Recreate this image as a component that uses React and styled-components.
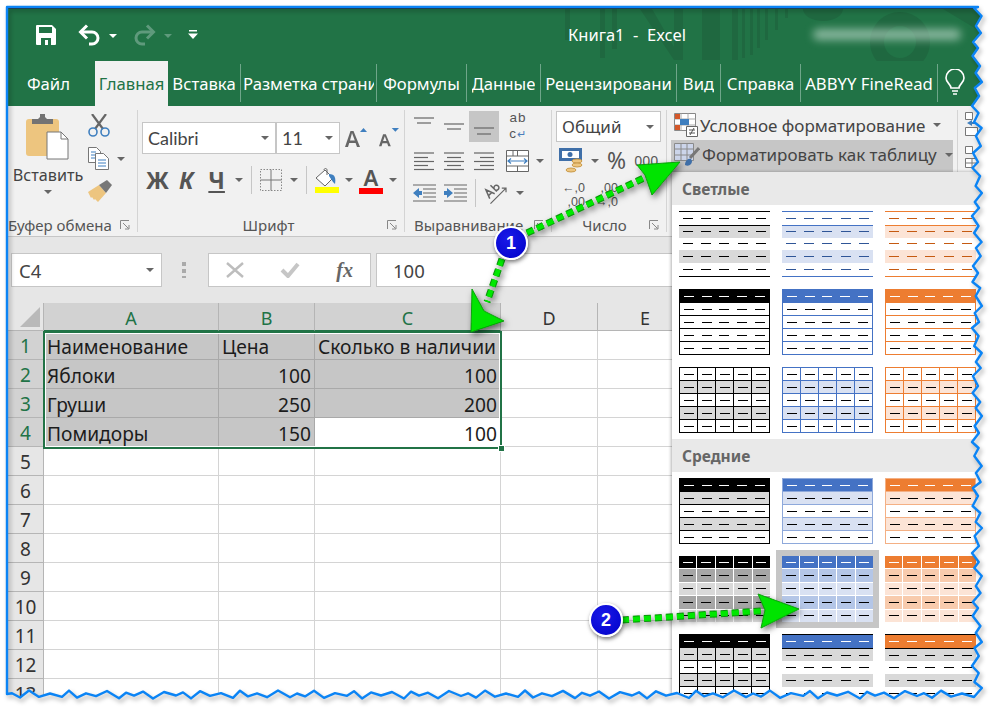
import styled, { createGlobalStyle } from "styled-components"

const UI_FONT = `"Noto Sans", "Open Sans", "Liberation Sans", sans-serif`

const GlobalStyle = createGlobalStyle`
  html, body {
    margin: 0;
    padding: 0;
    background: #fff;
    font-family: ${UI_FONT};
  }
`

const Page = styled.div`
  position: relative;
  width: 993px;
  height: 712px;
  overflow: hidden;
  background: #fff;
`

const Frame = styled.div`
  position: relative;
  margin: 8px 0 0 8px;
  width: 975px;
  height: 696px;
  overflow: hidden;
  background: #fff;
  display: flex;
  flex-direction: column;
`

/* title bar */
const TitleBar = styled.div`
  position: relative;
  flex: none;
  height: 52px;
  display: flex;
  align-items: center;
  background: #217346;
  border-top: 1px solid #26302b;
  box-sizing: border-box;
  color: #fff;
`

const TitleArt = styled.svg`
  position: absolute;
  right: 0;
  top: 0;
`

const Qat = styled.div`
  position: relative;
  width: 560px;
  flex: none;
  display: flex;
  align-items: center;
  padding-left: 28px;
  box-sizing: border-box;
`

const QatCaret = styled.span`
  width: 0;
  height: 0;
  margin: 2px 16px 0 8px;
  border: 4px solid transparent;
  border-bottom: 0;
  border-top: 4px solid ${(p) => (p.$dim ? "#5f9a7c" : "#fff")};
`

const WindowTitle = styled.div`
  position: relative;
  font-size: 16.5px;
  white-space: pre;
`

const Account = styled.div`
  position: relative;
  margin-left: auto;
  margin-right: 22px;
  width: 148px;
  height: 11px;
  border-radius: 6px;
  background: rgba(200, 225, 212, 0.62);
  filter: blur(4px);
`

/* tabs */
const TabRow = styled.div`
  flex: none;
  height: 46px;
  display: flex;
  background: #217346;
`

const Tab = styled.div`
  flex: none;
  box-sizing: border-box;
  width: ${(p) => p.$w}px;
  height: ${(p) => (p.$active ? "45px" : "38px")};
  margin-top: ${(p) => (p.$active ? "1px" : "4px")};
  padding-right: ${(p) => p.$shift || 0}px;
  display: flex;
  align-items: center;
  justify-content: center;
  white-space: nowrap;
  font-size: 16.7px;
  color: ${(p) => (p.$active ? "#217346" : "#fff")};
  background: ${(p) => (p.$active ? "#f1f1f1" : "transparent")};
  border-right: ${(p) => (p.$plain ? "0" : "1px solid #6fa68a")};
`

const TabLabel = styled.span`
  display: block;
  max-width: ${(p) => p.$max}px;
  overflow: hidden;
`

/* ribbon */
const Ribbon = styled.div`
  flex: none;
  height: 131px;
  display: flex;
  background: #f1f1f1;
  border-bottom: 1px solid #c6c6c6;
  box-sizing: border-box;
  color: #444;
`

const Group = styled.div`
  flex: none;
  width: ${(p) => p.$w}px;
  display: flex;
  flex-direction: column;
`

const GroupBody = styled.div`
  flex: 1;
  min-height: 0;
`

const GroupFoot = styled.div`
  flex: none;
  height: 22px;
  padding-right: 7px;
  box-sizing: border-box;
  display: flex;
  align-items: center;
  font-size: 15px;
  color: #555;
  white-space: nowrap;
`

const FootLabel = styled.span`
  flex: 1;
  text-align: ${(p) => p.$align || "center"};
  padding-left: ${(p) => p.$pad || 0}px;
  overflow: hidden;
`

const GroupDivider = styled.div`
  flex: none;
  width: 1px;
  margin: 4px 0;
  background: #d4d4d4;
`

const ClipBody = styled(GroupBody)`
  display: flex;
`

const PasteButton = styled.div`
  width: 80px;
  flex: none;
  display: flex;
  flex-direction: column;
  align-items: center;
  padding-top: 8px;
  font-size: 16.2px;
  gap: 4px;
`

const ClipTools = styled.div`
  display: flex;
  flex-direction: column;
  align-items: flex-start;
  gap: 10px;
  padding-top: 8px;
`

const Row = styled.div`
  display: flex;
  align-items: center;
  gap: ${(p) => p.$gap || 0}px;
  margin-left: ${(p) => p.$left || 0}px;
  margin-top: ${(p) => p.$top || 0}px;
`

const Caret = styled.span`
  display: inline-block;
  flex: none;
  width: 0;
  height: 0;
  margin-left: ${(p) => p.$left ?? 6}px;
  margin-right: ${(p) => p.$right ?? 0}px;
  border: 4.5px solid transparent;
  border-bottom: 0;
  border-top: 4.5px solid #666;
`

const Combo = styled.div`
  flex: none;
  box-sizing: border-box;
  width: ${(p) => p.$w}px;
  height: ${(p) => p.$h || 32}px;
  display: flex;
  align-items: center;
  justify-content: space-between;
  padding: 0 6px 0 5px;
  background: #fff;
  border: 1px solid #c6c6c6;
  font-size: ${(p) => p.$size || 16}px;
  color: #444;
`

const FontName = styled.span`
  font-family: Lato, ${UI_FONT};
  font-size: 18px;
`

const StyleLetter = styled.span`
  font-size: 23px;
  font-weight: 700;
  font-style: ${(p) => (p.$italic ? "italic" : "normal")};
  margin-left: ${(p) => p.$left || 0}px;
  color: #555;
  line-height: 1;
  text-decoration: ${(p) => (p.$under ? "underline" : "none")};
`

const RibbonRule = styled.span`
  flex: none;
  width: 1px;
  height: 28px;
  margin: 0 ${(p) => p.$m ?? 8}px;
  background: #c6c6c6;
`

const AccentGlyph = styled.span`
  display: flex;
  flex-direction: column;
  align-items: center;
  margin-left: ${(p) => p.$left || 0}px;
  font-size: ${(p) => (p.$empty ? 0 : 22)}px;
  font-weight: 600;
  line-height: 22px;
  color: #555;

  &::after {
    content: "";
    width: 24px;
    height: 6px;
    background: ${(p) => p.$bar};
  }
`

const AlignCell = styled.div`
  width: 30px;
  height: 31px;
  display: flex;
  align-items: center;
  justify-content: center;
  background: ${(p) => (p.$on ? "#c6c6c6" : "transparent")};
`

const WrapMark = styled.div`
  width: 38px;
  font-family: "Liberation Sans", sans-serif;
  font-size: 13.5px;
  line-height: 15.5px;
  letter-spacing: 1px;
  color: #555;
  text-align: center;
`

const WrapArrow = styled.span`
  color: #4a7ebb;
  font-size: 11px;
`

const NumberStep = styled.div`
  display: flex;
  flex-direction: column;
  align-items: flex-end;
  width: 26px;
  font-family: "Liberation Sans", sans-serif;
  font-size: 12.5px;
  line-height: 14px;
  color: #555;
`

const Percent = styled.span`
  margin-left: 8px;
  font-size: 23px;
  color: #555;
  line-height: 1;
`

const Thousands = styled.span`
  margin-left: 8px;
  font-size: 14px;
  color: #555;
`

const StylesBody = styled(GroupBody)`
  display: flex;
  flex-direction: column;
  padding: 4px 4px 0 4px;
`

const StyleCommand = styled.div`
  height: ${(p) => (p.$on ? 32 : 30)}px;
  box-sizing: border-box;
  display: flex;
  align-items: center;
  gap: 2px;
  padding: 0 0 ${(p) => (p.$on ? 3 : 0)}px 3px;
  font-size: 17px;
  white-space: nowrap;
  background: ${(p) => (p.$on ? "#c6c6c6" : "transparent")};
`

const NextGroup = styled.div`
  flex: none;
  display: flex;
  flex-direction: column;
  gap: 10px;
  padding: 6px 0 0 7px;
`

/* formula bar */
const FormulaBar = styled.div`
  flex: none;
  height: 66px;
  padding: 16px 0 16px 3px;
  box-sizing: border-box;
  display: flex;
  align-items: stretch;
  background: #e6e6e6;
`

const FormulaBox = styled.div`
  flex: none;
  box-sizing: border-box;
  width: ${(p) => p.$w}px;
  margin-right: ${(p) => p.$gap || 0}px;
  display: flex;
  align-items: center;
  justify-content: ${(p) => p.$justify || "flex-start"};
  padding: 0 ${(p) => p.$pad ?? 7}px;
  background: #fff;
  border: 1px solid #c6c6c6;
  font-size: 18.5px;
  color: #444;
`

const Grip = styled.div`
  flex: none;
  width: 4px;
  margin: 9px 22px 9px 20px;
  background: repeating-linear-gradient(#aaa 0 4px, transparent 4px 7px);
`

const FxMark = styled.span`
  font-family: "Liberation Serif", serif;
  font-style: italic;
  font-weight: 700;
  font-size: 20px;
  color: #666;
`

/* sheet */
const Sheet = styled.div`
  position: relative;
  flex: 1;
  display: grid;
  grid-template-columns: 36px 175px 96px 186px 97px 95px 1fr;
  grid-auto-rows: 29px;
  grid-template-rows: 28px;
  background: #fff;
  font-size: 19.2px;
  color: #1c1c1c;
`

const Corner = styled.div`
  background: #e6e6e6;
  border-right: 1px solid #b5b5b5;
  border-bottom: 1px solid #b5b5b5;
  display: flex;
  align-items: flex-end;
  justify-content: flex-end;
  padding: 0 3px 3px 0;
`

const ColHead = styled.div`
  display: flex;
  align-items: center;
  justify-content: center;
  box-sizing: border-box;
  padding-top: 2px;
  background: ${(p) => (p.$on ? "#d2d2d2" : "#e6e6e6")};
  color: ${(p) => (p.$on ? "#217346" : "#333")};
  border-right: 1px solid #b5b5b5;
  border-bottom: 1px solid ${(p) => (p.$on ? "#217346" : "#b5b5b5")};
  font-size: 18px;
`

const RowHead = styled(ColHead)`
  border-bottom: 1px solid #b5b5b5;
  font-size: 19px;
`

const Cell = styled.div`
  display: flex;
  align-items: center;
  justify-content: ${(p) => (p.$num ? "flex-end" : "flex-start")};
  box-sizing: border-box;
  padding: 2px 3px 0;
  white-space: nowrap;
  background: ${(p) => (p.$on ? "#c6c6c6" : "#fff")};
  border-right: 1px solid ${(p) => (p.$on ? "#a9a9a9" : "#d4d4d4")};
  border-bottom: 1px solid ${(p) => (p.$on ? "#a9a9a9" : "#d4d4d4")};
`

const Selection = styled.div`
  position: absolute;
  left: 35px;
  top: 28px;
  width: 459px;
  height: 118px;
  box-sizing: border-box;
  border: 2px solid #217346;
  box-shadow: inset 0 0 0 1px #fff;
  pointer-events: none;

  &::after {
    content: "";
    position: absolute;
    right: -5px;
    bottom: -5px;
    width: 5px;
    height: 5px;
    background: #217346;
    border: 1px solid #fff;
  }
`

/* table styles gallery */
const Gallery = styled.div`
  position: absolute;
  left: 664px;
  top: 164px;
  width: 320px;
  bottom: 0;
  background: #fff;
  box-shadow: -1px 0 3px rgba(0, 0, 0, 0.3);
`

const GalleryHead = styled.div`
  height: 33px;
  display: flex;
  align-items: center;
  padding-left: 10px;
  background: #e9e9e9;
  font-size: 15.5px;
  font-weight: 700;
  color: #666;
`

const ThumbGrid = styled.div`
  display: grid;
  grid-template-columns: repeat(3, 91px);
  grid-auto-rows: 66px;
  gap: 12px;
  padding: 6px 7px;
`

const Thumb = styled.div`
  display: grid;
  grid-template-columns: repeat(5, 1fr);
  grid-template-rows: repeat(5, 1fr);
  box-sizing: border-box;
  height: 66px;
  column-gap: ${(p) => p.$colGap || 0}px;
  row-gap: ${(p) => p.$rowGap || 0}px;
  background: ${(p) => p.$line || "#fff"};
  border-style: solid;
  border-color: ${(p) => p.$edge || "transparent"};
  border-width: ${(p) => p.$edgeWidth || "0"};
  box-shadow: ${(p) => (p.$picked ? "0 0 0 6px #c6c6c6" : "none")};
`

const ThumbCell = styled.div`
  display: flex;
  align-items: center;
  justify-content: center;
  min-height: 0;
  background: ${(p) => p.$bg};
  border-top: ${(p) => (p.$rule ? `1px solid ${p.$rule}` : "0")};
`

const Dash = styled.span`
  width: 10px;
  height: 1px;
  background: ${(p) => p.$color};
`

/* annotations */
const Overlay = styled.svg`
  position: absolute;
  left: 0;
  top: 0;
  pointer-events: none;
`

const Badge = styled.div`
  position: absolute;
  left: ${(p) => p.$x - 17}px;
  top: ${(p) => p.$y - 17}px;
  width: 34px;
  height: 34px;
  box-sizing: border-box;
  display: flex;
  align-items: center;
  justify-content: center;
  border-radius: 50%;
  background: radial-gradient(circle at 40% 35%, #1a1ae8, #0000c8);
  border: 2.5px solid #fff;
  box-shadow: 1px 2px 4px rgba(0, 0, 0, 0.55);
  color: #fff;
  font-family: "Liberation Sans", sans-serif;
  font-weight: 700;
  font-size: 18px;
`

/* ---------- data ---------- */

const palettes = [
  { main: "#000000", dim: "#000000", band: "#d9d9d9", soft: "#000000", strong: "#a6a6a6", pale: "#d9d9d9" },
  { main: "#4472c4", dim: "#2f5597", band: "#d9e1f2", soft: "#8ea9db", strong: "#b4c6e7", pale: "#d9e1f2" },
  { main: "#ed7d31", dim: "#c55a11", band: "#fce4d6", soft: "#f4b084", strong: "#f8cbad", pale: "#fce4d6" },
]

const isBand = (r) => r === 1 || r === 3

// each preview kind gives the frame of the thumbnail and the look of one row
const thumbKinds = {
  light: (c) => ({
    frame: { $edge: c.main, $edgeWidth: "1px 0" },
    row: (r) => ({ bg: isBand(r) ? c.band : "#fff", dash: c.dim, rule: r === 1 ? c.main : null }),
  }),
  boxed: (c) => ({
    frame: { $edge: c.main, $edgeWidth: "1px", $line: c.main, $rowGap: 1 },
    row: (r) => ({ bg: r === 0 ? c.main : "#fff", dash: r === 0 ? "#fff" : "#000" }),
  }),
  grid: (c) => ({
    frame: { $edge: c.main, $edgeWidth: "1px", $line: c.main, $rowGap: 1, $colGap: 1 },
    row: (r) => ({ bg: isBand(r) ? c.band : "#fff", dash: "#000" }),
  }),
  banded: (c) => ({
    frame: { $edge: c.soft, $edgeWidth: "1px", $line: c.soft, $rowGap: 1 },
    row: (r) => ({ bg: r === 0 ? c.main : isBand(r) ? c.band : "#fff", dash: r === 0 ? "#fff" : "#000" }),
  }),
  solid: (c) => ({
    frame: { $line: "#fff", $rowGap: 1, $colGap: 1 },
    row: (r) => ({ bg: r === 0 ? c.main : isBand(r) ? c.strong : c.pale, dash: r === 0 ? "#fff" : "#000" }),
  }),
  ruled: (c) =>
    c.main === "#000000"
      ? {
          frame: { $edge: "#000", $edgeWidth: "1px", $line: "#000", $rowGap: 1, $colGap: 1 },
          row: (r) => ({ bg: r === 0 ? "#000" : isBand(r) ? "#d9d9d9" : "#fff", dash: r === 0 ? "#fff" : "#000" }),
        }
      : {
          frame: { $edge: "#000", $edgeWidth: "1px 0 0" },
          row: (r) => ({
            bg: r === 0 ? c.main : isBand(r) ? "#d9d9d9" : "#fff",
            dash: r === 0 ? "#fff" : "#000",
            rule: r === 1 ? "#000" : null,
          }),
        },
}

const tabs = [
  ["Файл", 87, false, true, 6],
  ["Главная", 73, true, true],
  ["Вставка", 73],
  ["Разметка страни", 136],
  ["Формулы", 90],
  ["Данные", 74],
  ["Рецензировани", 136],
  ["Вид", 44],
  ["Справка", 80],
  ["ABBYY FineRead", 137],
]

const columns = ["A", "B", "C", "D", "E"]
const sheetRows = [
  ["Наименование", "Цена", "Сколько в наличии"],
  ["Яблоки", 100, 100],
  ["Груши", 250, 200],
  ["Помидоры", 150, 100],
]

/* ---------- drawings ---------- */

const SaveIcon = () => (
  <svg width="20" height="20" viewBox="0 0 20 20">
    <path fill="#fff" d="M0 1a1 1 0 0 1 1-1h15l4 4v15a1 1 0 0 1-1 1H1a1 1 0 0 1-1-1z" />
    <path fill="#217346" d="M3 2h13v6H3zM5 13h10v7H5z" />
    <path fill="#fff" d="M9 15h3v5H9z" />
  </svg>
)

const UndoIcon = ({ color, flip }) => (
  <svg width="23" height="22" viewBox="0 0 23 22" style={flip ? { transform: "scaleX(-1)" } : undefined}>
    <path fill="none" stroke={color} strokeWidth="3" d="M3 8h11a6 6 0 0 1 0 12h-3" />
    <path fill="none" stroke={color} strokeWidth="3" d="M9 1.5 2.5 8 9 14.5" />
  </svg>
)

const CustomizeIcon = () => (
  <svg width="10" height="9" viewBox="0 0 10 9">
    <path fill="#fff" d="M1 0h8v1.4H1zM0 3.5h10L5 9z" />
  </svg>
)

const BulbIcon = () => (
  <svg width="22" height="28" viewBox="0 0 22 28">
    <path fill="none" stroke="#fff" strokeWidth="1.6" d="M7 19c0-4-5-5-5-10a9 9 0 0 1 18 0c0 5-5 6-5 10z" />
    <path stroke="#fff" strokeWidth="1.6" d="M8 22h6M9 25h4" />
  </svg>
)

const PasteIcon = () => (
  <svg width="44" height="46" viewBox="0 0 44 46">
    <rect x="0" y="5" width="33" height="37" rx="3" fill="#edc57f" />
    <path fill="#737373" d="M6 5h6l2-2V0h5v3l2 2h6v5H6z" />
    <path fill="#fff" stroke="#777" d="M21 18h14l7 7v20H21z" />
    <path fill="none" stroke="#777" d="M35 18v7h7" />
  </svg>
)

const ScissorsIcon = () => (
  <svg width="22" height="23" viewBox="0 0 22 23">
    <path stroke="#666" strokeWidth="2.2" d="M4 0 15 15M18 0 7 15" />
    <circle cx="5" cy="18" r="4" fill="none" stroke="#3f7fbf" strokeWidth="1.6" />
    <circle cx="17" cy="18" r="4" fill="none" stroke="#3f7fbf" strokeWidth="1.6" />
  </svg>
)

const CopyIcon = () => (
  <svg width="21" height="23" viewBox="0 0 21 23">
    <path fill="#fff" stroke="#777" d="M.5.5h8l4 4v11H.5z" />
    <path fill="#fff" stroke="#777" d="M7.5 6.5h8l5 5v11h-13z" />
    <path stroke="#3f7fbf" d="M3 5h5M3 8h4M3 11h4M10 13h8M10 16h8M10 19h8" />
  </svg>
)

const BrushIcon = () => (
  <svg width="24" height="22" viewBox="0 0 24 22">
    <path fill="#edc57f" d="M0 12 11 5l7 8-8 9-3-3-1 1-2-3-1 1z" />
    <path fill="#777" d="m11 5 8-5 5 5-6 8z" />
  </svg>
)

const GrowIcon = ({ up }) => (
  <svg width={up ? 22 : 20} height="22" viewBox="0 0 22 22">
    <path
      fill="#666"
      d={up ? "M5.5 4h3L15 20h-3l-1.4-4H4.2L3 20H0zM5 13.500h4.800L7 6z" : "M4.500 7h3L13 20h-2.800l-1.200-3.300H3.800L2.800 20H0zM4.500 14.300h3.800L6.400 9z"}
    />
    <path fill="#3f7fbf" d={up ? "M15 5l3.500-4L22 5z" : "M14 0h8l-4 4z"} />
  </svg>
)

const BordersIcon = () => (
  <svg width="22" height="22" viewBox="0 0 22 22">
    <path fill="none" stroke="#888" strokeDasharray="1.500 1.500" d="M.5.5h21v21H.5z" />
    <path fill="none" stroke="#777" d="M11 .5v21M.5 11h21" />
  </svg>
)

const BucketIcon = () => (
  <svg width="24" height="19" viewBox="0 0 24 19">
    <path fill="#fff" stroke="#666" d="M1 10 10 2l8 8-8 8z" />
    <path fill="none" stroke="#666" d="M9 2c0-2 3-2 3 0v5" />
    <path fill="#3f7fbf" d="M14 6c6 0 7 4 6 10l-2-2-4-6z" />
  </svg>
)

const LinesIcon = ({ rows, h = 20 }) => (
  <svg width="22" height={h} viewBox={`0 0 22 ${h}`}>
    {rows.map(([a, b, y]) => (
      <path key={y} stroke="#666" strokeWidth="1.2" d={`M${a} ${y}H${b}`} />
    ))}
  </svg>
)

const blockLines = (offsets) =>
  [2, 6.500, 10.500, 14.500, 18.500].map((y, i) => [offsets[i % 2][0], offsets[i % 2][1], y])

const MergeIcon = () => (
  <svg width="23" height="22" viewBox="0 0 23 22">
    <path fill="#fff" stroke="#666" d="M.5.5h22v21H.5z" />
    <path stroke="#666" d="M.5 6h22M.5 16h22M11.500.5V6M7 .5V6M11.500 16v5.500" />
    <path fill="none" stroke="#3f7fbf" strokeWidth="1.200" d="M2 11h19M5 8.500 2 11l3 2.500M18 8.500l3 2.500-3 2.500" />
  </svg>
)

const IndentIcon = ({ flip }) => (
  <svg width="23" height="18" viewBox="0 0 23 18">
    <path stroke="#666" strokeWidth="1.200" d="M0 1h23M10 5h13M10 9h13M10 13h13M0 17h23" />
    <path fill="#3f7fbf" d={flip ? "M9 9 3 4v3H0v4h3v3z" : "M0 9l6-5v3h3v4H6v3z"} />
  </svg>
)

const OrientIcon = () => (
  <svg width="24" height="22" viewBox="0 0 24 22">
    <g transform="rotate(-45 10 11)" fill="#666">
      <path stroke="#666" strokeWidth="1.200" fill="none" d="M0 16h22M19 13l3 3-3 3" />
      <path stroke="#666" strokeWidth="1.500" fill="none" d="M3 12 6.500 3 10 12M4.500 9h4M13 3v9M13 8.500a2.500 2.500 0 1 1 0 1" />
    </g>
  </svg>
)

const MoneyIcon = () => (
  <svg width="25" height="25" viewBox="0 0 25 25">
    <rect x="0" y="0" width="23" height="13" fill="#3f6fa8" />
    <rect x="3" y="3" width="17" height="7" fill="#fff" />
    <circle cx="11" cy="6.500" r="2.500" fill="#3f6fa8" />
    <ellipse cx="18" cy="13" rx="5" ry="2" fill="#edc57f" stroke="#c99a4a" />
    <ellipse cx="18" cy="17" rx="5" ry="2" fill="#edc57f" stroke="#c99a4a" />
    <ellipse cx="12" cy="22" rx="5" ry="2" fill="#edc57f" stroke="#c99a4a" />
  </svg>
)

const CondIcon = () => (
  <svg width="24" height="24" viewBox="0 0 24 24">
    <path fill="#fff" stroke="#888" d="M.5.5h21v17H.5z" />
    <path stroke="#aaa" d="M.5 6h21M.5 12h21M7 .5v17M14 .5v17" />
    <path fill="#d4582a" d="M1 1h5v5H1z" />
    <path fill="#3f7fbf" d="M6 6h9v6H6z" />
    <path fill="#d4582a" d="M1 12h5v5H1z" />
    <path fill="#fff" stroke="#666" d="M12.500 13.500h11v10h-11z" />
    <path stroke="#555" d="M15 17h6M15 20h6M20 15l-4 7" />
  </svg>
)

const TableBrushIcon = () => (
  <svg width="26" height="24" viewBox="0 0 26 24">
    <path fill="#ccd5ea" stroke="#8a8a8a" d="M.5.5h19v17H.5z" />
    <path stroke="#8a8a8a" d="M.5 6h19M.5 12h19M7 .5v17M13 .5v17" />
    <path stroke="#777" strokeWidth="3" d="M16 15 25 5" />
    <path fill="#3f6fa8" d="M11 22c0-4 3-7 6-6l1 2c0 3-3 6-7 4z" />
  </svg>
)

const CellStackIcon = () => (
  <svg width="14" height="24" viewBox="0 0 14 24">
    <path fill="#fff" stroke="#777" d="M.5.5h7v7h-7zM.5 15.500h12v8H.5z" />
    <path fill="#3f7fbf" d="M2 11l5-3v2h4v2H7v2z" />
  </svg>
)

const CellGridIcon = () => (
  <svg width="14" height="22" viewBox="0 0 14 22">
    <path fill="#fff" stroke="#777" d="M.5.5h7v7h-7zM.5 12.500h13v9H.5z" />
    <path stroke="#777" d="M7 12.500v9M.5 17h13" />
  </svg>
)

const Launcher = () => (
  <svg width="10" height="10" viewBox="0 0 10 10">
    <path fill="none" stroke="#888" d="M.5 9V.5H9M3 3l5.500 5.500M5 9h4V5" />
  </svg>
)

const CrossIcon = () => (
  <svg width="18" height="16" viewBox="0 0 18 16">
    <path stroke="#bdbdbd" strokeWidth="2.400" d="m1 1 16 14M17 1 1 15" />
  </svg>
)

const CheckIcon = () => (
  <svg width="20" height="16" viewBox="0 0 20 16">
    <path fill="none" stroke="#c6c6c6" strokeWidth="4" d="m2 8 6 6L18 2" />
  </svg>
)

const zigRight = []
for (let i = 0, y = 8; y < 694; i++, y += 6 + ((i * 7) % 5)) {
  zigRight.push([977 + (i % 2 ? 3 : -3) + 2 * Math.sin(i * 0.9), y])
}
const zigBottom = []
for (let i = 0, x = 974; x > 8; i++, x -= 7 + ((i * 5) % 6)) {
  zigBottom.push([x, 695 + (i % 2 ? -3 : 2) + 1.5 * Math.sin(i * 1.7)])
}
const edgeLine = `M7 7H978 ${zigRight.map((p) => `L${p[0].toFixed(1)} ${p[1]}`).join(" ")} ${zigBottom
  .map((p) => `L${p[0]} ${p[1].toFixed(1)}`)
  .join(" ")} L7 694Z`

const GreenArrow = ({ from, to, head }) => (
  <g filter="url(#arrowShadow)">
    <path d={`M${from} L${to}`} stroke="#0b8f0b" strokeWidth="7" strokeDasharray="7 4" fill="none" />
    <path d={`M${from} L${to}`} stroke="#00e800" strokeWidth="5" strokeDasharray="7 4" fill="none" />
    <path d={head} fill="#00e400" stroke="#0aa00a" strokeWidth="1" />
  </g>
)

const Annotations = () => (
  <Overlay width="993" height="712" viewBox="0 0 993 712">
    <defs>
      <filter id="arrowShadow" x="-30%" y="-30%" width="160%" height="160%">
        <feDropShadow dx="2" dy="3" stdDeviation="3" floodColor="#000" floodOpacity="0.55" />
      </filter>
      <filter id="edgeShadow" x="-5%" y="-5%" width="110%" height="110%">
        <feGaussianBlur stdDeviation="2" />
      </filter>
    </defs>
    <GreenArrow from="527 233" to="646 177" head="M680 162 637 165 645 175 652 195Z" />
    <GreenArrow from="502 259" to="487 302" head="M471 332 472 289 484 311 504 321Z" />
    <GreenArrow from="622 620" to="762 611" head="M799 609 758 594 765 610 761 628Z" />
    <path d={`M0 0H993V712H0Z ${edgeLine}`} fill="#fff" fillRule="evenodd" />
    <path d={edgeLine} fill="none" stroke="#000" strokeOpacity="0.25" strokeWidth="3" transform="translate(2 3)" filter="url(#edgeShadow)" />
    <path d={edgeLine} fill="none" stroke="#0b84f5" strokeWidth="2.400" strokeLinejoin="round" />
  </Overlay>
)

const TableThumb = ({ kind, tone, picked }) => {
  const look = thumbKinds[kind](palettes[tone])
  return (
    <Thumb {...look.frame} $picked={picked}>
      {[0, 1, 2, 3, 4].map((r) => {
        const row = look.row(r)
        return [0, 1, 2, 3, 4].map((c) => (
          <ThumbCell key={`${r}-${c}`} $bg={row.bg} $rule={row.rule}>
            <Dash $color={row.dash} />
          </ThumbCell>
        ))
      })}
    </Thumb>
  )
}

const ThumbSection = ({ title, kinds, picked }) => (
  <>
    <GalleryHead>{title}</GalleryHead>
    <ThumbGrid>
      {kinds.map((kind) =>
        palettes.map((_, tone) => (
          <TableThumb key={kind + tone} kind={kind} tone={tone} picked={picked === `${kind}${tone}`} />
        ))
      )}
    </ThumbGrid>
  </>
)

export default function App() {
  return (
    <Page>
      <GlobalStyle />
      <Frame>
        <TitleBar>
          {/* faint backdrop pattern of the Office title bar */}
          <TitleArt width="420" height="52" viewBox="563 9 420 52">
            <g fill="#1f6840">
              <path d="M565 9h5v31h-5zM600 9h5v49h-5zM612 9h5v40h-5z" />
              <path d="M640 9h12l22 38V9h9v51h-9z" />
              <path d="M702 9h18v51h-18zM732 9h6v51h-6zM742 9h3v49h-3zM750 9h3v46h-3zM757 9h3v39h-3zM765 9h3v31h-3zM775 9h3v21h-3zM785 9h3v9h-3z" />
              <path d="M803 9h40a20 12 0 0 1-40 0zM943 9h40v24z" />
            </g>
            <circle cx="900" cy="42" r="23" fill="none" stroke="#1f6840" strokeWidth="14" />
          </TitleArt>
          <Qat>
            <SaveIcon />
            <span style={{ width: 22 }} />
            <UndoIcon color="#fff" />
            <QatCaret />
            <UndoIcon color="#5f9a7c" flip />
            <QatCaret $dim />
            <CustomizeIcon />
          </Qat>
          <WindowTitle>{"Книга1  -  Excel"}</WindowTitle>
          <Account />
        </TitleBar>

        <TabRow>
          {tabs.map(([label, w, active, plain, shift]) => (
            <Tab key={label} $w={w} $active={active} $plain={plain} $shift={shift}>
              <TabLabel $max={w - 5}>{label}</TabLabel>
            </Tab>
          ))}
          <Tab $w={34} $plain>
            <BulbIcon />
          </Tab>
        </TabRow>

        <Ribbon>
          <Group $w={129}>
            <ClipBody>
              <PasteButton>
                <PasteIcon />
                <span>Вставить</span>
                <Caret $left={0} />
              </PasteButton>
              <ClipTools>
                <ScissorsIcon />
                <Row>
                  <CopyIcon />
                  <Caret $left={8} />
                </Row>
                <BrushIcon />
              </ClipTools>
            </ClipBody>
            <GroupFoot>
              <FootLabel $align="left">Буфер обмена</FootLabel>
              <Launcher />
            </GroupFoot>
          </Group>
          <GroupDivider />

          <Group $w={266}>
            <GroupBody>
              <Row $left={4} $top={16}>
                <Combo $w={134}>
                  <FontName>Calibri</FontName>
                  <Caret />
                </Combo>
                <Combo $w={64}>
                  <FontName>11</FontName>
                  <Caret />
                </Combo>
                <Row $left={5} $gap={12}>
                  <GrowIcon up />
                  <GrowIcon />
                </Row>
              </Row>
              <Row $left={8} $top={12}>
                <StyleLetter>Ж</StyleLetter>
                <StyleLetter $italic $left={10}>
                  К
                </StyleLetter>
                <StyleLetter $under $left={15}>
                  Ч
                </StyleLetter>
                <Caret $left={10} />
                <RibbonRule />
                <BordersIcon />
                <Caret $left={8} />
                <RibbonRule />
                <AccentGlyph $bar="#ffff00" $empty>
                  <BucketIcon />
                </AccentGlyph>
                <Caret $left={6} />
                <AccentGlyph $bar="#ff0000" $left={6}>
                  A
                </AccentGlyph>
                <Caret $left={6} />
              </Row>
            </GroupBody>
            <GroupFoot>
              <FootLabel $pad={12}>Шрифт</FootLabel>
              <Launcher />
            </GroupFoot>
          </Group>
          <GroupDivider />

          <Group $w={146}>
            <GroupBody>
              <Row $left={4} $top={4}>
                <AlignCell>
                  <LinesIcon rows={[[1, 21, 2], [4, 18, 7]]} />
                </AlignCell>
                <AlignCell>
                  <LinesIcon rows={[[1, 21, 8], [4, 18, 13]]} />
                </AlignCell>
                <AlignCell $on>
                  <LinesIcon rows={[[1, 21, 12], [4, 18, 18]]} />
                </AlignCell>
                <WrapMark>
                  ab
                  <br />c<WrapArrow>↵</WrapArrow>
                </WrapMark>
              </Row>
              <Row $left={4} $top={3}>
                <AlignCell>
                  <LinesIcon rows={blockLines([[1, 21], [1, 15]])} />
                </AlignCell>
                <AlignCell>
                  <LinesIcon rows={blockLines([[1, 21], [4, 18]])} />
                </AlignCell>
                <AlignCell>
                  <LinesIcon rows={blockLines([[1, 21], [7, 21]])} />
                </AlignCell>
                <Row $left={7}>
                  <MergeIcon />
                  <Caret $left={7} />
                </Row>
              </Row>
              <Row $left={8} $top={3} $gap={8}>
                <IndentIcon />
                <IndentIcon flip />
                <RibbonRule $m={0} />
                <OrientIcon />
                <Caret $left={0} />
              </Row>
            </GroupBody>
            <GroupFoot>
              <FootLabel $pad={9} $align="left">
                Выравнивание
              </FootLabel>
              <Launcher />
            </GroupFoot>
          </Group>
          <GroupDivider />

          <Group $w={114}>
            <GroupBody>
              <Row $left={4} $top={5}>
                <Combo $w={105} $h={31} $size={17}>
                  Общий
                  <Caret />
                </Combo>
              </Row>
              <Row $left={7} $top={6}>
                <MoneyIcon />
                <Caret $left={7} />
                <Percent>%</Percent>
                <Thousands>000</Thousands>
              </Row>
              <Row $left={7} $top={8} $gap={7}>
                <NumberStep>
                  <span>←,0</span>
                  <span>,00</span>
                </NumberStep>
                <NumberStep>
                  <span>,00</span>
                  <span>→,0</span>
                </NumberStep>
              </Row>
            </GroupBody>
            <GroupFoot>
              <FootLabel $pad={8}>Число</FootLabel>
              <Launcher />
            </GroupFoot>
          </Group>
          <GroupDivider />

          <Group $w={290}>
            <StylesBody>
              <StyleCommand>
                <CondIcon />
                Условное форматирование
                <Caret />
              </StyleCommand>
              <StyleCommand $on>
                <TableBrushIcon />
                Форматировать как таблицу
                <Caret />
              </StyleCommand>
            </StylesBody>
          </Group>
          <GroupDivider />
          <NextGroup>
            <CellStackIcon />
            <CellGridIcon />
          </NextGroup>
        </Ribbon>

        <FormulaBar>
          <FormulaBox $w={151} $justify="space-between">
            C4
            <Caret />
          </FormulaBox>
          <Grip />
          <FormulaBox $w={163} $gap={5} $justify="space-between" $pad={17}>
            <CrossIcon />
            <CheckIcon />
            <FxMark>fx</FxMark>
          </FormulaBox>
          <FormulaBox $w={300} $pad={16}>
            100
          </FormulaBox>
        </FormulaBar>

        <Sheet>
          <Corner>
            <svg width="20" height="20" viewBox="0 0 20 20">
              <path fill="#b9b9b9" d="M20 0v20H0z" />
            </svg>
          </Corner>
          {columns.map((c, i) => (
            <ColHead key={c} $on={i < 3}>
              {c}
            </ColHead>
          ))}
          <ColHead />
          {Array.from({ length: 13 }, (_, r) => {
            const row = sheetRows[r]
            return [
              <RowHead key={`h${r}`} $on={r < 4}>
                {r + 1}
              </RowHead>,
              ...[0, 1, 2, 3, 4, 5].map((c) => {
                const value = row ? row[c] : undefined
                const filled = row && c < 3 && !(r === 3 && c === 2)
                return (
                  <Cell key={`${r}-${c}`} $on={filled} $num={typeof value === "number"}>
                    {value}
                  </Cell>
                )
              }),
            ]
          })}
          <Selection />
        </Sheet>

        <Gallery>
          <ThumbSection title="Светлые" kinds={["light", "boxed", "grid"]} />
          <ThumbSection title="Средние" kinds={["banded", "solid", "ruled"]} picked="solid1" />
        </Gallery>
      </Frame>

      <Annotations />
      <Badge $x={511} $y={243}>1</Badge>
      <Badge $x={606} $y={620}>2</Badge>
    </Page>
  )
}
